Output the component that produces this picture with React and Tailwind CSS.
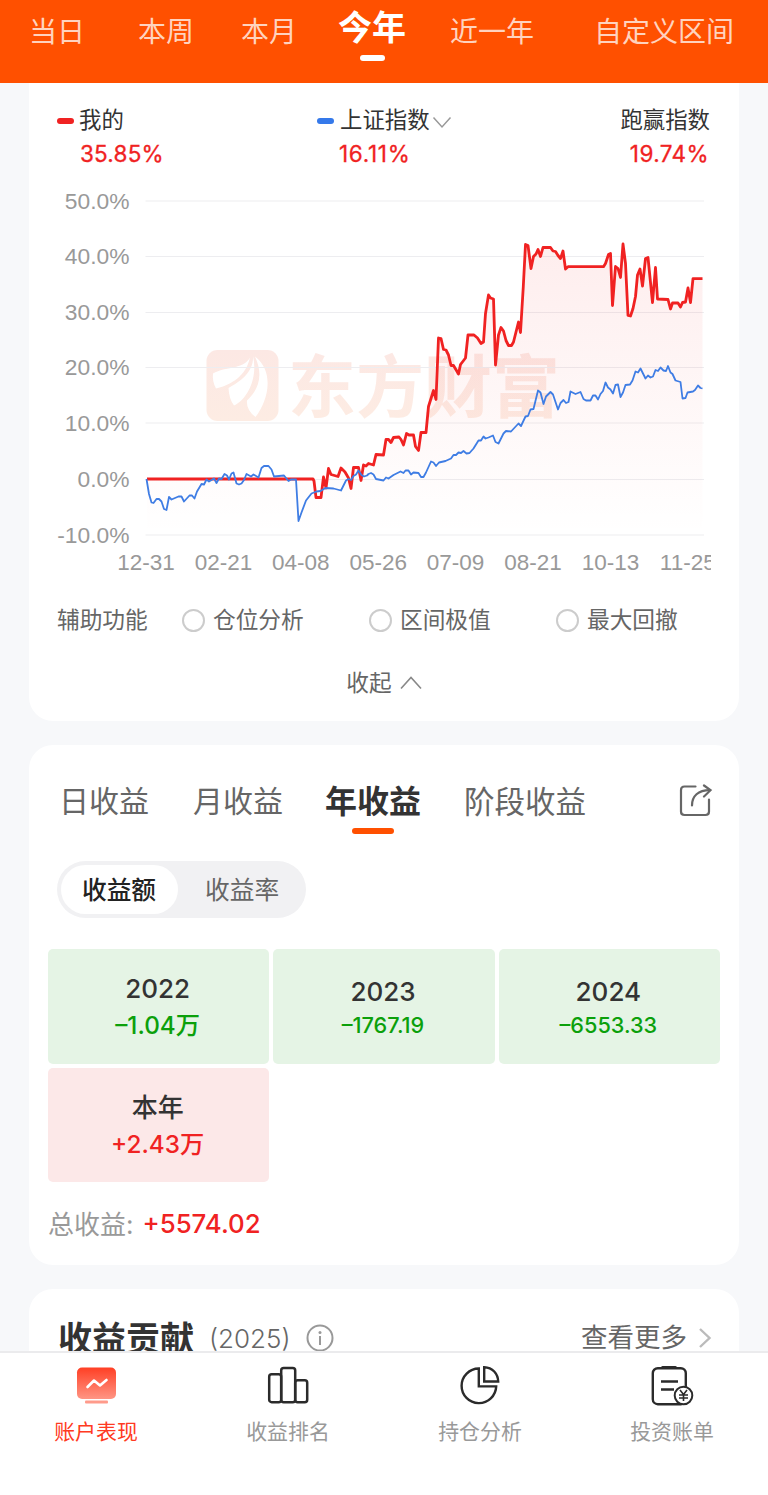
import React from "react";
import clsx from "clsx";

const RANGE_TABS = [
  { label: "当日", className: "ml-[29px]" },
  { label: "本周", className: "ml-[53px]" },
  { label: "本月", className: "ml-[47px]" },
  { label: "今年", className: "ml-[41px]", active: true },
  { label: "近一年", className: "ml-[44px]" },
  { label: "自定义区间", className: "ml-[60px]" },
];

const Y_TICKS = [
  { label: "50.0%", y: 201 },
  { label: "40.0%", y: 256.5 },
  { label: "30.0%", y: 312.5 },
  { label: "20.0%", y: 367.5 },
  { label: "10.0%", y: 423 },
  { label: "0.0%", y: 479.5 },
  { label: "-10.0%", y: 535 },
];

const X_TICKS = ["12-31", "02-21", "04-08", "05-26", "07-09", "08-21", "10-13", "11-25"];

const MINE =
  "147,479 313,479 314,481 316,497.5 321,497.5 323.5,477 326,488 328.5,468.5 331,474.5 338,476.5 341,468 345,472 348.5,478 351,488.5 353.5,467.5 358.5,467.5 361,480.5 363.5,465 366,466 368.5,463.5 373.5,465 376,454.5 383.5,455 386,439.5 388.5,439.5 391,442.5 393.5,437.5 399,437 401,439.5 403.5,445 406.5,433.5 409,435 413.5,435 415.5,446.5 418.5,450.5 421,432.5 426,432.5 428.5,406.5 433.5,390.5 436,399.5 438.5,338 441,338.5 443.5,349.5 446,350 448.5,355 451,365.5 453.5,365.5 458.5,374 460.5,364.5 465.5,358 468,335 474,335 477.5,338 481,343.5 483.5,342 485.5,313.5 488.5,295 490.5,298 493.5,299 495.5,365 498.5,335 501,327.5 503.5,331 506,340.5 508.5,345.5 511.5,345.5 513.5,342 518.5,322 520.5,332.5 523.3,286.5 525.5,244.5 528,245.5 531,268.5 533.5,256.5 536,254 538,249.5 540.5,256.5 543,247.5 550.5,247.5 553,251 555.5,251.5 558,255.5 560.5,258.5 563,251 565.5,269 568,266.7 603.5,266.7 605.5,263.5 608.5,254.5 610.5,253.5 612.5,305.5 615.5,266.5 618,268.5 620.5,277.5 623,244 625.5,263.5 628,315.5 630.5,316 633,308.5 635.5,296.5 637.5,275 640,269 642.5,286 645.5,258.5 648,257.5 652.5,302.5 655.5,267.5 657.5,299 668,299.5 670.5,309 672.5,303 678,303 680.5,307 682.5,302.5 685.5,302 688,288 690.5,302.5 693,278.7 702.5,278.7";

const INDEX =
  "146.5,479 149,494 151.5,502.5 153.5,503 156.5,499 159,499 161.5,501.5 164,509 166.5,510 169,497 171.5,499.5 178.5,496.5 181.5,496.5 184,501.5 189.5,495.5 192,495.5 194.5,498.5 197,491.5 201.5,484 204,484.5 206.5,479.5 209,481.5 214,478.5 216.5,483 219,478.5 221.5,479 224.5,474 227,475.5 229,479.5 231.5,473.5 233.5,472.5 236.5,483.5 239,484.5 241.5,483.5 244,480 246.5,474 251,476.5 253.5,474.5 258.5,477.5 261.5,468 264,466 268.5,466 271.5,469.5 274,476.5 284,475.5 288.5,481 291,479.5 296,479.5 298.5,521 301.5,512.5 306,500.5 311.5,493.5 316.5,491.5 320.5,491 325.5,488 333.5,488.5 341,490.5 346,480.5 348.5,479 351,480 353.5,476 356,474.5 358.5,470.5 361.5,475 364,476.5 367,475.5 368.5,474 371,473 373.5,474.5 376,479 383.5,480.5 386,477.5 388.5,478.5 393.5,475 400.5,471.5 403.5,473 405.5,470.5 408.5,470.5 411,474.5 413.5,472.5 418.5,473 421,477 423.5,477 426,472.5 431,461.5 433.5,462.5 436,466 439,462.5 445.5,461 451,458.5 453.5,455 456,455 458.5,452.5 461,453 463.5,451 466.5,453.5 469.5,453 473.5,448.5 478.5,440.5 481,440.5 483.5,436.5 485.5,438.5 488.5,437.5 493,435.5 495.5,442 498.5,443.5 503.5,433.5 506,431 511,431.5 518.5,423.5 521,426 525.5,416.5 528,416 530.5,409.5 533.5,409 538,390.5 540.5,392.5 543.5,404 546,396.5 550.5,392 553,394.5 558,409.5 560.5,403 563.5,400 566,403 568.5,402 570.5,391.5 575.5,394 580.5,392 583.5,399 586,400.5 590.5,400.5 593,395.5 595.5,395.5 598,399.5 600.5,394 603,391 605.5,382.5 608,387.5 610.5,389.5 613,393.5 615.5,385 618,384.5 620.5,397 623,392.5 625.5,385 630,384.5 632.5,380.5 635.5,371.5 638,372.5 640.5,368.5 645.5,378.5 648,375.5 650.5,377.5 653,376.5 655.5,370 658,371 660.5,367.5 663.5,370.5 666,371 668,366 670.5,372.5 672.5,374 675.5,380.5 680.5,382 682.5,398.5 685.5,398 687.5,392.5 693,391.5 695,390 698,385.5 700.5,388 702.5,388.5";

const HELPERS = ["仓位分析", "区间极值", "最大回撤"];

const YEARS = [
  { year: "2022", value: "–1.04万", large: true },
  { year: "2023", value: "–1767.19" },
  { year: "2024", value: "–6553.33" },
  { year: "本年", value: "+2.43万", large: true, up: true },
];

const RangeHeader = () => (
  <header className="flex h-[83px] shrink-0 bg-[#ff5000] whitespace-nowrap">
    {RANGE_TABS.map((tab) => (
      <div key={tab.label} className={clsx("flex flex-col items-center", tab.className)}>
        {tab.active ? (
          <>
            <span className="h-[55px] text-[34px] leading-[55px] font-bold text-white">{tab.label}</span>
            <span className="h-1.5 w-[25px] rounded-full bg-white" />
          </>
        ) : (
          <span className="text-[28px] leading-[65px] text-[#ffd3bf]">{tab.label}</span>
        )}
      </div>
    ))}
  </header>
);

const Legend = () => (
  <div className="flex pt-5 pr-[29px] pl-7 text-[22.4px] leading-[34px] text-[#333]">
    <div className="w-[260px]">
      <div className="flex items-center">
        <span className="mt-0.5 mr-[5px] h-1.5 w-[17px] rounded-[3px] bg-[#f02222]" />
        我的
      </div>
      <div className="pl-[23px] text-[22.5px] tracking-[0.2px] text-[#f02222] [-webkit-text-stroke:0.3px]">35.85%</div>
    </div>
    <div className="grow">
      <div className="flex items-center">
        <span className="mt-0.5 mr-[6px] h-1.5 w-[17px] rounded-[3px] bg-[#3579ea]" />
        上证指数
        <svg className="mt-1 ml-[2px]" width="20" height="13" fill="none" stroke="#999" strokeWidth="1.5">
          <path d="M1.5 1.5 10 11l8.500-9.500" />
        </svg>
      </div>
      <div className="pl-[22px] text-[22.5px] tracking-[0.7px] text-[#f02222] [-webkit-text-stroke:0.3px]">16.11%</div>
    </div>
    <div className="text-right">
      <div>跑赢指数</div>
      <div className="pr-px text-[22.5px] tracking-[0.4px] text-[#f02222] [-webkit-text-stroke:0.3px]">19.74%</div>
    </div>
  </div>
);

const ProfitChart = () => (
  <svg className="block" width="710" height="419" viewBox="29 171 710 419" fill="none">
    <defs>
      <linearGradient id="area" x1="0" y1="244" x2="0" y2="535" gradientUnits="userSpaceOnUse">
        <stop offset="0" stopColor="#f02222" stopOpacity="0.08" />
        <stop offset="1" stopColor="#f02222" stopOpacity="0" />
      </linearGradient>
      <linearGradient id="mark" x1="0" y1="350" x2="0" y2="421" gradientUnits="userSpaceOnUse">
        <stop offset="0" stopColor="#fce8e4" />
        <stop offset="1" stopColor="#fdece3" />
      </linearGradient>
      <clipPath id="axis">
        <rect x="29" y="540" width="682" height="50" />
      </clipPath>
    </defs>

    <rect x="206.500" y="350" width="72" height="71" rx="11" fill="url(#mark)" />
    <path d="M250 357.500C243 370 226 366 213 373.500Q212 381 216 388.500C231 385 246 376 250 357.500Z" fill="#fff" />
    <path d="M253 356C254 372 240 382 228.500 388Q229 399 234 405.500C248 399 258 377 253 356Z" fill="#fff" />
    <path d="M255 356.500C265 378 256 392 247 400.500Q246 410 255.500 417C267 402 276 373 255 356.500Z" fill="#fff" />
    <text
      x="288"
      y="412"
      textLength="272"
      fill="url(#mark)"
      className="font-['Noto_Sans_CJK_SC',sans-serif] text-[68px] font-bold"
    >
      东方财富
    </text>

    {Y_TICKS.map((tick) => (
      <g key={tick.label}>
        <path d={`M145.500 ${tick.y}H704`} stroke="#ededf0" strokeWidth="1.2" />
        <text
          x="129.500"
          y={tick.y + 7.5}
          textAnchor="end"
          fill="#999"
          className="font-['Liberation_Sans',Arial,sans-serif] text-[22.8px]"
        >
          {tick.label}
        </text>
      </g>
    ))}

    <polygon points={`${MINE} 702.5,535 147,535`} fill="url(#area)" />
    <polyline points={MINE} stroke="#f02222" strokeWidth="2.8" strokeLinejoin="round" />
    <polyline points={INDEX} stroke="#3f7de4" strokeWidth="1.8" strokeLinejoin="round" />

    <g clipPath="url(#axis)">
      {X_TICKS.map((label, i) => (
        <text
          key={label}
          x={146 + i * 77.4}
          y="569.500"
          textAnchor="middle"
          fill="#999"
          className="font-['Liberation_Sans',Arial,sans-serif] text-[22.5px]"
        >
          {label}
        </text>
      ))}
    </g>
  </svg>
);

const TrendCard = () => (
  <section className="h-[638px] shrink-0 rounded-b-[24px] bg-white">
    <Legend />
    <ProfitChart />
    <div className="flex h-[61px] items-center pl-7 text-[22.7px] text-[#666]">
      <span className="w-[125px] shrink-0">辅助功能</span>
      {HELPERS.map((label) => (
        <label key={label} className="flex w-[187px] shrink-0 items-center gap-2">
          <span className="size-[23px] rounded-full border-2 border-[#ccc]" />
          {label}
        </label>
      ))}
    </div>
    <div className="flex h-16 items-center justify-center gap-2 text-[22.7px] text-[#666]">
      收起
      <svg width="22" height="14" fill="none" stroke="#888" strokeWidth="1.600">
        <path d="M1 12.500 11 1.500l10 11" />
      </svg>
    </div>
  </section>
);

const ShareIcon = () => (
  <svg
    className="mt-[7px] ml-auto"
    width="34"
    height="34"
    fill="none"
    stroke="#666"
    strokeWidth="2.200"
    strokeLinecap="round"
  >
    <path d="M16.500 2.500H5.500Q2 2.500 2 6v21.500Q2 31 5.500 31h21q3.500 0 3.500-3.500V15.500" />
    <path d="M13 21.500C13 12 19 6.200 31 6.200" />
    <path d="m25 1.500 6.500 4.700L25 12.500" />
  </svg>
);

const ProfitCard = () => (
  <section className="mt-6 h-[520px] shrink-0 rounded-[24px] bg-white pt-8">
    <div className="flex h-[57px] pr-[26px] pl-[30px] text-[30px] leading-[49px] text-[#666]">
      <span>日收益</span>
      <span className="ml-[44px]">月收益</span>
      <div className="ml-[42px] flex flex-col items-center">
        <span className="h-[51px] text-[32px] font-bold text-[#333]">年收益</span>
        <span className="h-1.5 w-[42px] rounded-[3px] bg-[#ff5000]" />
      </div>
      <span className="ml-[43px] text-[30.500px]">阶段收益</span>
      <ShareIcon />
    </div>

    <div className="mt-[27px] ml-7 flex h-[57px] w-[249px] rounded-full bg-[#f1f1f3] p-1 text-[24.700px] leading-[51px]">
      <span className="h-[49px] w-[117px] rounded-full bg-white pr-px text-center font-medium text-[#222]">收益额</span>
      <span className="grow pl-[27px] text-[#666]">收益率</span>
    </div>

    <div className="mt-[31px] grid grid-cols-3 gap-1 px-[19px]">
      {YEARS.map((item) => (
        <div
          key={item.year}
          className={clsx(
            "flex h-[114.500px] flex-col items-center rounded-[5px] pr-0.5 font-medium",
            item.up ? "bg-[#fce8e8] text-[#f02222]" : "bg-[#e5f4e5] text-[#0ba00b]",
            item.large ? "pt-[21px]" : "pt-[24px]"
          )}
        >
          <span className="text-[26px] leading-[37px] text-[#333]">{item.year}</span>
          <span className={clsx(item.large ? "text-[24.300px] leading-[37px]" : "text-[21.700px] leading-[31px]")}>
            {item.value}
          </span>
        </div>
      ))}
    </div>

    <div className="mt-5 flex h-11 items-center gap-[9px] pl-[19px] text-[26px]">
      <span className="text-[#999]">总收益:</span>
      <span className="text-[25.800px] font-medium text-[#f02222]">+5574.02</span>
    </div>
  </section>
);

const ContributionCard = () => (
  <section className="mt-6 h-40 shrink-0 rounded-t-[24px] bg-white pt-6">
    <div className="flex h-[50px] items-center pr-[27px] pl-[29px] text-[26px] text-[#666]">
      <h2 className="text-[34px] font-bold text-[#333]">收益贡献</h2>
      <span className="ml-[15px] font-light">(2025)</span>
      <svg className="ml-[15px]" width="28" height="28" fill="none" stroke="#999" strokeWidth="2">
        <circle cx="14" cy="14" r="12.500" />
        <path d="M14 12v9" />
        <circle cx="14" cy="8.500" r="1.500" fill="#999" stroke="none" />
      </svg>
      <span className="ml-auto text-[26.500px]">查看更多</span>
      <svg className="ml-[11px]" width="14" height="22" fill="none" stroke="#bbb" strokeWidth="2.400">
        <path d="m2 2 9.500 9L2 20" />
      </svg>
    </div>
  </section>
);

const PerformanceIcon = () => (
  <svg width="44" height="44" viewBox="0 0 44 44" fill="none">
    <defs>
      <linearGradient id="screen" x1="0" y1="0" x2="0" y2="1">
        <stop offset="0" stopColor="#ff3f24" />
        <stop offset="1" stopColor="#ff9584" />
      </linearGradient>
    </defs>
    <rect x="3" y="3.500" width="39" height="31.500" rx="5" fill="url(#screen)" />
    <path d="m13.500 23 6.500-6.500 6 5 6.500-5.500" stroke="#fff" strokeWidth="2.600" strokeLinecap="round" strokeLinejoin="round" />
    <rect x="11" y="36.500" width="23" height="3" rx="1" fill="#ff9b8b" />
  </svg>
);

const RankIcon = () => (
  <svg width="44" height="44" viewBox="0 0 44 44" fill="none" stroke="#2b2b2b" strokeWidth="2.500">
    <rect x="3.200" y="10.200" width="12" height="28" rx="2.500" />
    <rect x="15.200" y="4" width="14" height="34.200" rx="2.500" />
    <rect x="29.200" y="16.200" width="12" height="22" rx="2.500" />
  </svg>
);

const PieIcon = () => (
  <svg width="44" height="44" viewBox="0 0 44 44" fill="none" stroke="#2b2b2b" strokeWidth="2.400">
    <path d="M20.800 4.500A17.300 17.300 0 1 0 38.200 22.400H20.800Z" />
    <path d="M26.200 3.200V17.500h14C40 9.500 34.500 3.500 26.200 3.200Z" />
  </svg>
);

const BillIcon = () => (
  <svg width="44" height="44" viewBox="0 0 44 44" fill="none" stroke="#2b2b2b" strokeWidth="2.400">
    <rect x="2.800" y="4.200" width="33" height="36" rx="5" />
    <path d="M12.500 3.500h13" strokeWidth="3" strokeLinecap="round" />
    <path d="M11 17.500h17M11 25.500h13" />
    <circle cx="33.500" cy="31.500" r="8.800" fill="#fff" strokeWidth="2" />
    <path d="m30 26 3.500 4.500L37 26M33.500 30.500V37M29 31h9M29 34h9" strokeWidth="1.600" />
  </svg>
);

const NAV = [
  { label: "账户表现", icon: <PerformanceIcon />, active: true },
  { label: "收益排名", icon: <RankIcon /> },
  { label: "持仓分析", icon: <PieIcon /> },
  { label: "投资账单", icon: <BillIcon /> },
];

const App = () => {
  return (
    <div className="flex h-[1495px] w-[768px] flex-col overflow-hidden bg-[#f7f8fa] font-['Inter','Noto_Sans_CJK_SC',sans-serif]">
      <RangeHeader />
      <main className="flex min-h-0 flex-1 flex-col overflow-hidden px-[29px]">
        <TrendCard />
        <ProfitCard />
        <ContributionCard />
      </main>
      <nav className="grid h-[144px] shrink-0 grid-cols-4 border-t-2 border-[#ebebed] bg-white">
        {NAV.map((item) => (
          <div key={item.label} className="flex flex-col items-center pt-[11px]">
            {item.icon}
            <span className={clsx("mt-[9px] text-[20.900px] leading-[30px]", item.active ? "text-[#ff3a22]" : "text-[#999]")}>
              {item.label}
            </span>
          </div>
        ))}
      </nav>
    </div>
  );
};

export default App;
